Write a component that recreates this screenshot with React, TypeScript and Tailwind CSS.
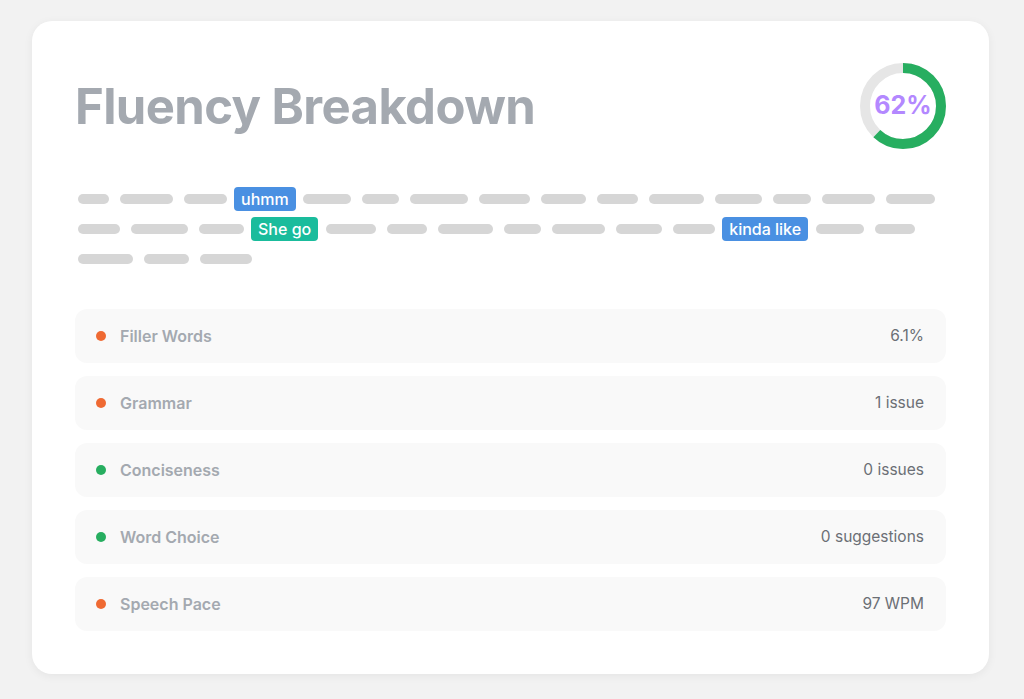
import React from 'react';

type Token = { w: number } | { chip: string; color: string };

const lines: Token[] = [
  { w: 31 }, { w: 53 }, { w: 43 }, { chip: 'uhmm', color: 'bg-[#4a90e2]' },
  { w: 48 }, { w: 37 }, { w: 58 }, { w: 51 }, { w: 45 }, { w: 41 }, { w: 55 },
  { w: 47 }, { w: 38 }, { w: 53 }, { w: 49 },
  { w: 42 }, { w: 57 }, { w: 45 }, { chip: 'She go', color: 'bg-[#1abc9c]' },
  { w: 50 }, { w: 40 }, { w: 55 }, { w: 37 }, { w: 53 }, { w: 46 }, { w: 42 },
  { chip: 'kinda like', color: 'bg-[#4a90e2]' }, { w: 48 }, { w: 40 },
  { w: 55 }, { w: 45 }, { w: 52 },
];

const metrics = [
  { label: 'Filler Words', value: '6.1%', dot: 'bg-[#ef6a33]' },
  { label: 'Grammar', value: '1 issue', dot: 'bg-[#ef6a33]' },
  { label: 'Conciseness', value: '0 issues', dot: 'bg-[#27ae60]' },
  { label: 'Word Choice', value: '0 suggestions', dot: 'bg-[#27ae60]' },
  { label: 'Speech Pace', value: '97 WPM', dot: 'bg-[#ef6a33]' },
];

const ScoreRing = ({ pct }: { pct: number }) => {
  const r = 38;
  const c = 2 * Math.PI * r;
  return (
    <div className="relative w-[86px] h-[86px] shrink-0">
      <svg width="86" height="86" viewBox="0 0 86 86" className="-rotate-90">
        <circle cx="43" cy="43" r={r} fill="none" stroke="#e6e6e6" strokeWidth="10" />
        <circle
          cx="43"
          cy="43"
          r={r}
          fill="none"
          stroke="#27ae60"
          strokeWidth="10"
          strokeDasharray={`${(c * pct) / 100} ${c}`}
        />
      </svg>
      <div className="absolute inset-0 flex items-center justify-center text-[25px] font-bold text-[#b388ff]">
        {pct}%
      </div>
    </div>
  );
};

export default function App() {
  return (
    <div className="min-h-[699px] bg-[#f2f2f2] pt-[21px] pl-[32px] pr-[35px] font-['Inter',sans-serif]">
      <div className="bg-white rounded-[20px] shadow-[0_2px_10px_rgba(0,0,0,0.06)] px-[43px] pt-[42px] pb-[43px]">
        <div className="flex items-center justify-between">
          <h1 className="text-[49px] font-bold text-[#a4a9b0] tracking-[-0.6px] leading-none">Fluency Breakdown</h1>
          <ScoreRing pct={62} />
        </div>

        <div className="mt-[35px] flex flex-wrap -ml-[3px]">
          {lines.map((t, i) =>
            'w' in t ? (
              <div key={i} className="h-[30px] flex items-center mx-[5.5px]">
                <div className="h-[10px] rounded-full bg-[#d6d6d6]" style={{ width: t.w }} />
              </div>
            ) : (
              <div key={i} className="h-[30px] flex items-center mx-[2px]">
                <span className={`${t.color} text-white text-[16px] font-medium leading-[24px] px-[7px] rounded-[4px]`}>
                  {t.chip}
                </span>
              </div>
            )
          )}
        </div>

        <div className="mt-[35px] flex flex-col gap-[13px]">
          {metrics.map((m) => (
            <div key={m.label} className="h-[54px] bg-[#f9f9f9] rounded-[12px] flex items-center justify-between pl-[21px] pr-[22px]">
              <div className="flex items-center gap-[14px]">
                <span className={`w-[10px] h-[10px] rounded-full ${m.dot}`} />
                <span className="text-[16px] font-semibold text-[#a4a9b0]">{m.label}</span>
              </div>
              <span className="text-[15.5px] text-[#6b6f75]">{m.value}</span>
            </div>
          ))}
        </div>
      </div>
    </div>
  );
}
